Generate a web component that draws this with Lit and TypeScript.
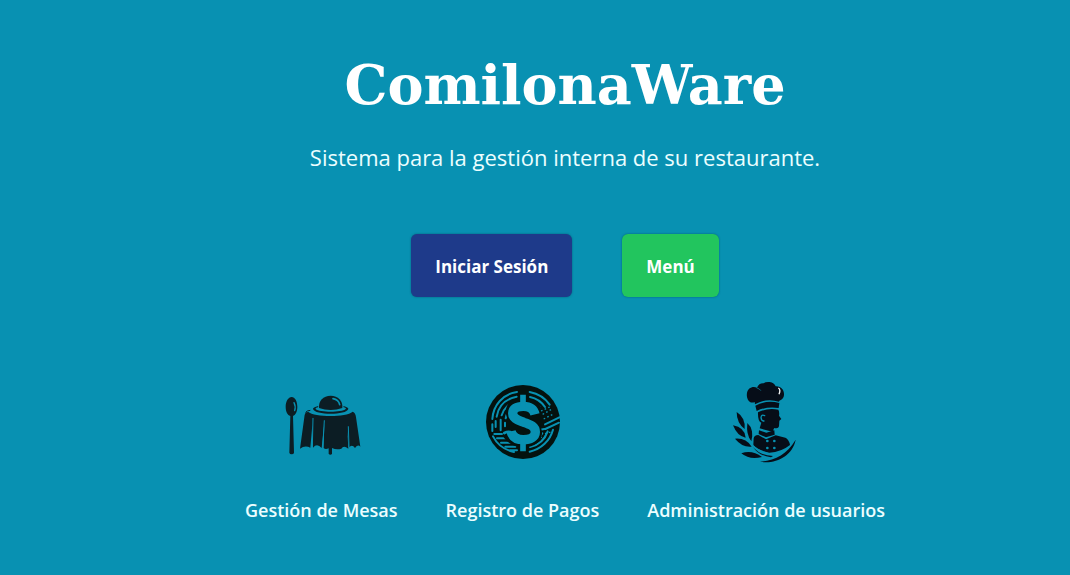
import { LitElement, html, css, svg } from "lit";
import { customElement } from "lit/decorators.js";

const tableIcon = svg`
  <svg class="icon" viewBox="-21 -24 300 300" aria-hidden="true">
    <g fill="#0c1d24">
      <path d="M41 51C51 51 58 64 58 80C58 95 52 105 45 108L48 218Q47 223 41 223Q35 223 34 218L37 108C29 105 23 95 23 80C23 64 31 51 41 51Z"/>
      <path d="M123 84C121 62 136 47 158 47C180 47 195 62 193 84Q176 90 158 90Q140 90 123 84Z"/>
      <path d="M121 78Q104 82 105 87C110 106 206 106 211 87Q212 82 196 78L197 82Q206 84 203 87C192 98 124 98 113 87Q111 84 120 82Z"/>
      <path d="M90 95C110 112 203 113 224 95Q233 99 234 112L247 200Q240 192 231 204Q222 192 213 202L208 150L211 206Q197 195 190 206Q176 211 162 204L162 222Q157 226 152 222L152 205Q142 210 137 204L139 130L131 204Q117 188 105 203L103 135L97 203Q81 194 66 206L80 104Q82 98 90 95Z"/>
    </g>
    <g fill="none" stroke="#0891b2" stroke-linecap="round">
      <path d="M48 68Q54 79 50 92" stroke-width="4"/>
      <path d="M165 56Q182 59 185 74" stroke-width="5"/>
      <path d="M105 115L103 202M139 122L134 202M211 140L213 200" stroke-width="3"/>
    </g>
    <path d="M88 105Q82 101 84 96Q87 92 97 91" fill="none" stroke="#0c1d24" stroke-width="3"/>
  </svg>`;

const coinIcon = svg`
  <svg class="icon" viewBox="-15 -15 300 300" aria-hidden="true">
    <circle cx="138" cy="135" r="111" fill="#04120f"/>
    <g fill="none" stroke="#0891b2" stroke-width="6" stroke-linecap="round">
      <path d="M120 45C78 51 49 84 46 126"/>
      <path d="M119 59C85 66 64 88 59 119M56 132V150M46 142V162"/>
      <path d="M117 74C96 79 79 95 74 115M71 128V160"/>
      <path d="M108 90C96 97 88 109 86 124M84 137V148"/>
      <path d="M158 45C184 50 205 64 218 83"/>
      <path d="M159 60C178 64 194 75 204 90"/>
      <path d="M160 75Q177 79 189 91"/>
      <path d="M204 142L247 121M205 156L246 137"/>
      <path d="M228 158C219 191 193 216 158 224"/>
      <path d="M212 163C204 187 184 204 159 210"/>
      <path d="M196 169Q184 189 161 196M190 158L202 156"/>
      <path d="M52 171H75M60 184H88M72 197H102M85 209H115M100 220H120"/>
      <path d="M82 168Q94 161 105 167M95 181Q106 174 119 181M107 194L120 195" stroke-width="8"/>
      <path d="M48 178Q67 215 111 225"/>
    </g>
    <g fill="none" stroke="#0891b2" stroke-width="4" stroke-dasharray="5 7">
      <path d="M192 102L218 90M197 112L222 98M200 126L228 112M204 170L225 164M190 182L213 175"/>
    </g>
    <g fill="none">
      <path d="M182 101Q165 77 139 77Q104 77 101 104Q101 124 139 134Q180 143 180 170Q177 194 139 197Q109 196 92 172" stroke="#04120f" stroke-width="30"/>
      <path d="M138 52V80M138 194V224" stroke="#04120f" stroke-width="27"/>
      <path d="M174 112C170 95 158 88 139 88C118 88 107 96 107 109C107 126 126 130 140 136C162 143 175 149 175 165C175 180 160 188 139 188C119 188 106 180 102 163" stroke="#0891b2" stroke-width="28"/>
      <path d="M138 53V89M138 189V223" stroke="#0891b2" stroke-width="17"/>
    </g>
  </svg>`;

const chefIcon = svg`
  <svg class="icon" viewBox="-24 -9 300 300" aria-hidden="true">
    <g fill="#060d18">
      <path d="M79 82Q66 72 69 54C71 38 87 32 99 38Q105 24 119 25Q124 20 137 21Q151 23 155 34C172 33 181 46 180 60Q179 73 166 77L165 80Q127 68 93 88L92 81Q86 84 79 82Z"/>
      <path d="M94 92Q128 74 166 84L164 99Q129 93 98 108Z"/>
      <path d="M102 112Q129 98 163 104Q167 112 165 122L172 132L166 137L165 154Q163 162 151 159Q147 163 148 171L125 165L107 160L112 143Q101 140 102 112Z"/>
      <path d="M105 166L127 173L151 166L152 179L126 187L104 177Z"/>
      <path d="M89 190Q90 181 103 180L126 193L155 181L184 188Q195 193 198 210Q172 231 136 233Q104 227 88 211Z"/>
      <path d="M38 111Q65 128 62 162Q38 144 38 111Z"/>
      <path d="M70 144Q91 163 82 199Q66 179 70 144Z"/>
      <path d="M27 151Q62 157 65 188Q40 184 27 151Z"/>
      <path d="M33 191Q66 188 83 215Q55 218 33 191Z"/>
      <path d="M52 235Q84 224 114 246Q77 256 52 235Z"/>
      <path d="M215 194C205 244 154 268 108 260C153 257 188 239 215 194Z"/>
      <path d="M87 216Q109 242 147 243L141 247Q105 243 87 216Z"/>
    </g>
    <g fill="none" stroke="#0891b2" stroke-linecap="round">
      <path d="M122 122Q112 117 111 128Q112 138 120 138" stroke-width="4"/>
      <path d="M75 191Q88 225 132 235M99 39Q107 41 110 46" stroke-width="2"/>
    </g>
    <path d="M163 39Q171 44 165 58" fill="none" stroke="#f2f5f5" stroke-width="4"/>
    <g fill="#0891b2">
      <circle cx="130" cy="198" r="4"/><circle cx="151" cy="198" r="4"/>
      <circle cx="130" cy="219" r="4"/><circle cx="151" cy="219" r="4"/>
    </g>
  </svg>`;

const features = [
  { icon: tableIcon, label: "Gestión de Mesas" },
  { icon: coinIcon, label: "Registro de Pagos" },
  { icon: chefIcon, label: "Administración de usuarios" },
];

@customElement("app-root")
export class AppRoot extends LitElement {
  static styles = css`
    :host {
      display: block;
      box-sizing: border-box;
      min-height: 100vh;
      padding: 49px 0 48px 60px;
      background: #0891b2;
      color: #ecfeff;
      font-family: "Segoe UI", "Open Sans", sans-serif;
    }
    .page {
      display: flex;
      flex-direction: column;
      align-items: center;
      text-align: center;
    }
    .title {
      margin: 0;
      color: #fff;
      font: bold 54px/72px Georgia, "DejaVu Serif", serif;
    }
    .subtitle {
      margin: 18px 0 0;
      font-size: 22px;
      line-height: 36px;
    }
    .actions {
      display: flex;
      flex-wrap: wrap;
      justify-content: center;
      gap: 50px;
      margin-top: 59px;
    }
    .button {
      padding: 19px 24px 17px;
      border: 0;
      border-radius: 6px;
      color: #fff;
      font: bold 17px/27px "Segoe UI", "Open Sans", sans-serif;
      box-shadow: 0 0 2px rgb(0 40 60 / 50%);
      cursor: pointer;
    }
    .login { background: #1e3a8a; }
    .menu { background: #22c55e; }
    .features {
      display: flex;
      flex-wrap: wrap;
      justify-content: center;
      gap: 48px;
      margin: 75px 0 0;
      padding: 0;
      list-style: none;
    }
    .feature {
      display: flex;
      flex-direction: column;
      align-items: center;
      gap: 25px;
    }
    .icon {
      width: 100px;
      height: 100px;
    }
    .label {
      margin: 0;
      font-size: 18px;
      font-weight: 600;
      line-height: 27px;
    }
  `;

  render() {
    return html`
      <main class="page">
        <h1 class="title">ComilonaWare</h1>
        <p class="subtitle">Sistema para la gestión interna de su restaurante.</p>
        <div class="actions">
          <button class="button login" type="button">Iniciar Sesión</button>
          <button class="button menu" type="button">Menú</button>
        </div>
        <ul class="features">
          ${features.map(
            (f) => html`<li class="feature">${f.icon}<h2 class="label">${f.label}</h2></li>`
          )}
        </ul>
      </main>
    `;
  }
}
